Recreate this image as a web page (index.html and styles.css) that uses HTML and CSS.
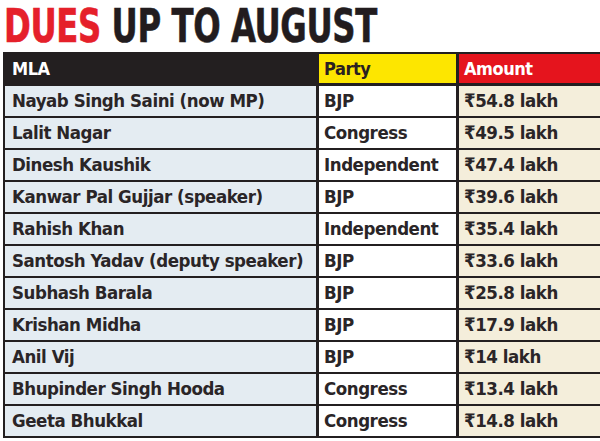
FILE: index.html
```html
<!DOCTYPE html>
<html>
<head>
<meta charset="utf-8">
<link rel="stylesheet" href="styles.css">
</head>
<body>
<div class="page">
  <div class="title-row"><h1 class="title"><span class="red">DUES</span> UP TO AUGUST</h1></div>
  <div class="table">
    <div class="cell head h-mla">MLA</div>
    <div class="cell head h-party">Party</div>
    <div class="cell head h-amt">Amount</div>

    <div class="cell mla">Nayab Singh Saini (now MP)</div><div class="cell party">BJP</div><div class="cell amt">₹54.8 lakh</div>
    <div class="cell mla">Lalit Nagar</div><div class="cell party">Congress</div><div class="cell amt">₹49.5 lakh</div>
    <div class="cell mla">Dinesh Kaushik</div><div class="cell party">Independent</div><div class="cell amt">₹47.4 lakh</div>
    <div class="cell mla">Kanwar Pal Gujjar (speaker)</div><div class="cell party">BJP</div><div class="cell amt">₹39.6 lakh</div>
    <div class="cell mla">Rahish Khan</div><div class="cell party">Independent</div><div class="cell amt">₹35.4 lakh</div>
    <div class="cell mla">Santosh Yadav (deputy speaker)</div><div class="cell party">BJP</div><div class="cell amt">₹33.6 lakh</div>
    <div class="cell mla">Subhash Barala</div><div class="cell party">BJP</div><div class="cell amt">₹25.8 lakh</div>
    <div class="cell mla">Krishan Midha</div><div class="cell party">BJP</div><div class="cell amt">₹17.9 lakh</div>
    <div class="cell mla">Anil Vij</div><div class="cell party">BJP</div><div class="cell amt">₹14 lakh</div>
    <div class="cell mla">Bhupinder Singh Hooda</div><div class="cell party">Congress</div><div class="cell amt">₹13.4 lakh</div>
    <div class="cell mla">Geeta Bhukkal</div><div class="cell party">Congress</div><div class="cell amt">₹14.8 lakh</div>
  </div>
</div>
</body>
</html>
```
FILE: styles.css
```css
html, body {
  margin: 0;
  padding: 0;
  background: #ffffff;
}
.page {
  width: 600px;
  height: 441px;
  overflow: hidden;
  font-family: "DejaVu Sans Condensed", "DejaVu Sans", sans-serif;
}
.title-row {
  height: 52px;
  padding-left: 4px;
}
.title {
  display: inline-block;
  margin: 0;
  padding-top: 2px;
  font-family: "DejaVu Sans Condensed", "DejaVu Sans", sans-serif;
  font-weight: bold;
  font-size: 46px;
  line-height: 48px;
  color: #221c1e;
  white-space: nowrap;
  transform: scaleX(0.78);
  transform-origin: left center;
  letter-spacing: -0.5px;
  -webkit-text-stroke: 0.6px currentColor;
}
.red { color: #e5202a; }
.table {
  margin-left: 3px;
  display: grid;
  grid-template-columns: 311px 137px 1fr;
  column-gap: 3px;
  row-gap: 2px;
  background: #231f20;
  padding: 2px 0 2px 2px;
}
.cell {
  height: 30px;
  line-height: 30px;
  font-size: 18.5px;
  font-weight: bold;
  letter-spacing: -0.45px;
  color: #2a2527;
  padding-left: 5px;
  white-space: nowrap;
}
.head {
  height: 29px;
  line-height: 29px;
  margin-bottom: 1px;
  font-size: 18px;
}
.h-mla { background: #231f20; color: #ffffff; padding-left: 7px; }
.h-party { background: #fde600; color: #2a2021; }
.h-amt { background: #e5141d; color: #ffffff; }
.mla { background: #e4ecf2; padding-left: 7px; }
.party { background: #ffffff; }
.amt { background: #f4eedb; }
```
